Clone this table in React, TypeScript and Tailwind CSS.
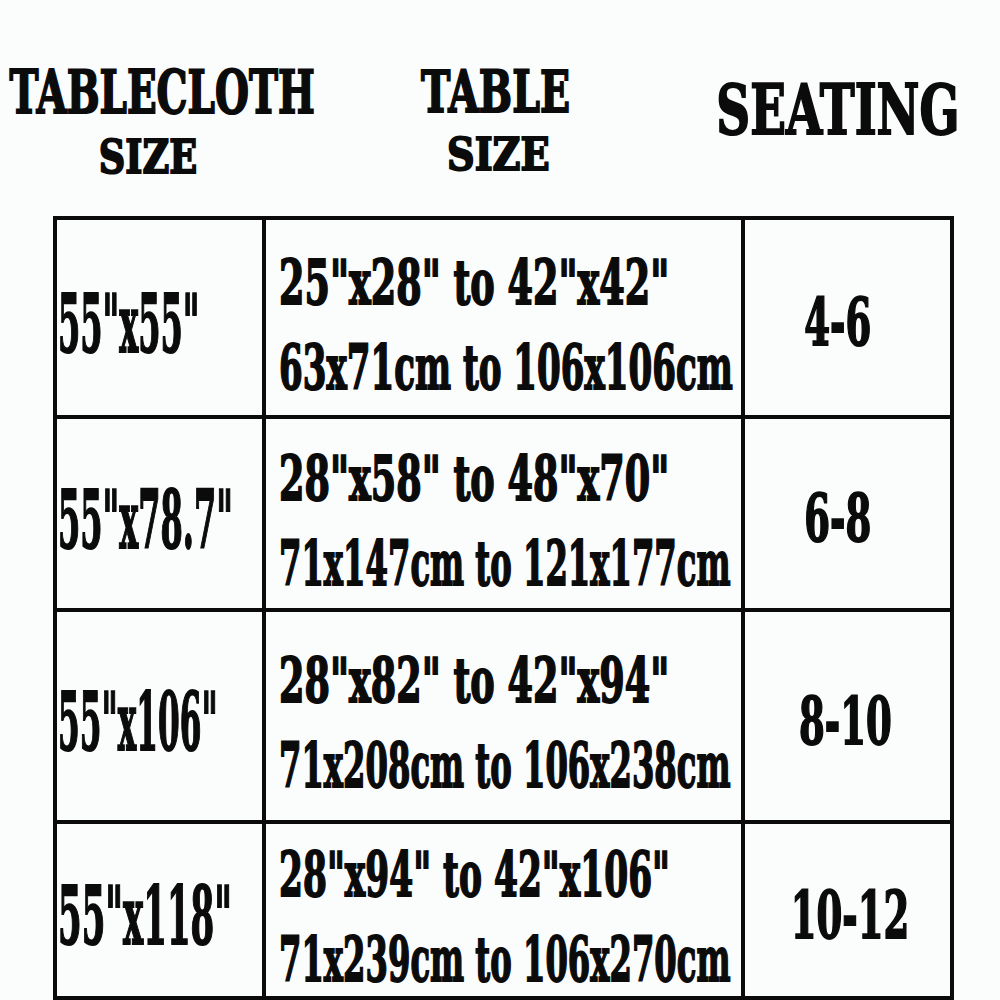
const rows = [
  {
    cloth: '55"x55"',
    clothScale: 'scale-x-[0.40]',
    inch: '25"x28" to 42"x42"',
    inchScale: 'scale-x-[0.59]',
    cm: '63x71cm to 106x106cm',
    cmScale: 'scale-x-[0.55]',
    seats: '4-6',
    seatShift: '-translate-x-[10px]',
  },
  {
    cloth: '55"x78.7"',
    clothScale: 'scale-x-[0.40]',
    inch: '28"x58" to 48"x70"',
    inchScale: 'scale-x-[0.59]',
    cm: '71x147cm to 121x177cm',
    cmScale: 'scale-x-[0.52]',
    seats: '6-8',
    seatShift: '-translate-x-[10px]',
  },
  {
    cloth: '55"x106"',
    clothScale: 'scale-x-[0.39]',
    inch: '28"x82" to 42"x94"',
    inchScale: 'scale-x-[0.59]',
    cm: '71x208cm to 106x238cm',
    cmScale: 'scale-x-[0.52]',
    seats: '8-10',
    seatShift: '-translate-x-[2px]',
  },
  {
    cloth: '55"x118"',
    clothScale: 'scale-x-[0.425]',
    inch: '28"x94" to 42"x106"',
    inchScale: 'scale-x-[0.555]',
    cm: '71x239cm to 106x270cm',
    cmScale: 'scale-x-[0.52]',
    seats: '10-12',
    seatShift: 'translate-x-[2px]',
  },
];

export default function App() {
  return (
    <div className="w-[1000px] h-[1000px] overflow-hidden bg-[#fbfcfc] text-[#0b0b0b] font-['DejaVu_Serif',serif] font-bold">
      {/* Header */}
      <div className="h-[216px] flex [-webkit-text-stroke:2px_#0b0b0b]">
        <div className="w-[324px] shrink-0 pt-[63px] flex flex-col items-center">
          <span className="block whitespace-nowrap text-[59px] leading-none scale-x-[0.66]">TABLECLOTH</span>
          <span className="block whitespace-nowrap text-[47px] leading-none mt-[11px] -translate-x-[14px] scale-x-[0.78]">SIZE</span>
        </div>
        <div className="w-[344px] shrink-0 pt-[63px] flex flex-col items-center">
          <span className="block whitespace-nowrap text-[58px] leading-none scale-x-[0.68]">TABLE</span>
          <span className="block whitespace-nowrap text-[45px] leading-none mt-[11px] translate-x-[2px] scale-x-[0.85]">SIZE</span>
        </div>
        <div className="w-[340px] shrink-0 pt-[75px] flex flex-col items-center">
          <span className="block whitespace-nowrap text-[69px] leading-none scale-x-[0.68]">SEATING</span>
        </div>
      </div>

      {/* Table */}
      <div className="ml-[53px] w-[901px] h-[784px] grid grid-cols-[205px_475px_205px] grid-rows-[195px_189px_208px_172px] gap-[4px] p-[4px] bg-[#0b0b0b] [-webkit-text-stroke:2px_#0b0b0b]">
        {rows.map((r) => (
          <div key={r.cloth} className="contents">
            <div className="bg-[#fbfcfc] flex items-center pt-[12px] pl-[1px]">
              <span className={`block whitespace-nowrap text-[80px] leading-none origin-left ${r.clothScale}`}>{r.cloth}</span>
            </div>
            <div className="bg-[#fbfcfc] flex flex-col justify-center pt-[14px] pl-[13px]">
              <span className={`block whitespace-nowrap text-[62px] leading-[85px] origin-left ${r.inchScale}`}>{r.inch}</span>
              <span className={`block whitespace-nowrap text-[62px] leading-[85px] origin-left ${r.cmScale}`}>{r.cm}</span>
            </div>
            <div className="bg-[#fbfcfc] flex items-center justify-center pt-[10px]">
              <span className={`block whitespace-nowrap text-[65px] leading-none scale-x-[0.57] ${r.seatShift}`}>{r.seats}</span>
            </div>
          </div>
        ))}
      </div>
    </div>
  );
}
